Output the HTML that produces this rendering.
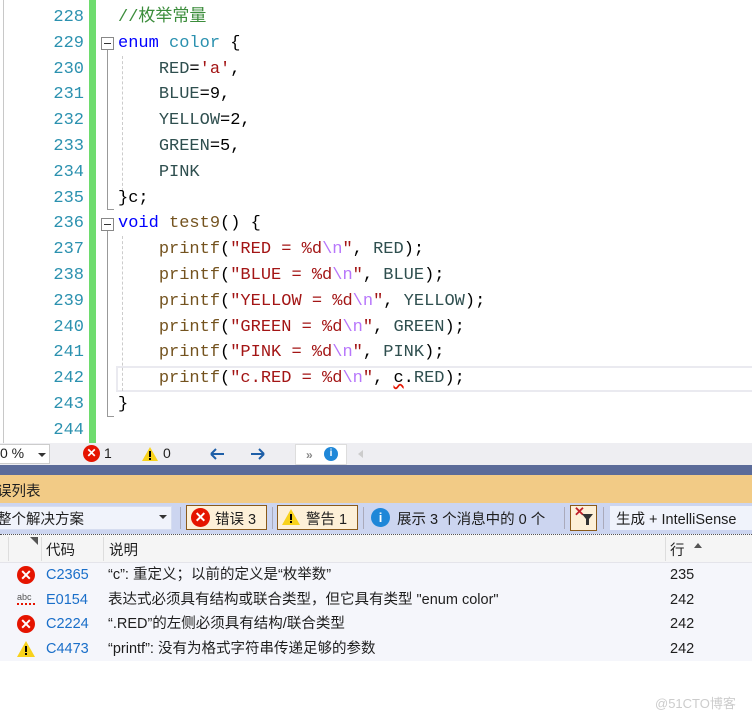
<!DOCTYPE html>
<html><head><meta charset="utf-8"><style>
*{margin:0;padding:0;box-sizing:border-box}
body{width:752px;height:721px;overflow:hidden;background:#fff;position:relative;font-family:"Liberation Sans","Noto Sans CJK SC",sans-serif}
.abs{position:absolute}
.ln{position:absolute;left:20px;width:64px;text-align:right;color:#2b91af;font-family:"Liberation Mono","Noto Sans CJK SC",monospace;font-size:17px;line-height:25.8px;height:25.8px}
.cl{position:absolute;left:118px;white-space:pre;font-family:"Liberation Mono","Noto Sans CJK SC",monospace;font-size:17px;line-height:25.8px;height:25.8px;color:#000}
.k{color:#0000ff}.t{color:#2b91af}.m{color:#2f4f4f}.s{color:#a31515}.e{color:#b776fb}.f{color:#74531f}.c{color:#3c8d3c}
.ui{font-size:14px;color:#1e1e1e;white-space:nowrap}
.row{position:absolute;left:0;width:752px;height:24.5px;font-size:14.5px;line-height:24.5px;color:#1e1e1e;white-space:nowrap}
.code{position:absolute;left:46px;color:#1a6fc9}
.desc{position:absolute;left:108px}
.lnum{position:absolute;left:670px}
.xic{position:absolute;width:18px;height:18px;border-radius:50%;background:#e51400;color:#fff;font-size:14px;font-weight:bold;line-height:18px;text-align:center}
</style></head><body>
<!-- editor gutter -->
<div class="abs" style="left:3px;top:0;width:1px;height:443px;background:#c8c8c8"></div>
<div class="abs" style="left:89px;top:0;width:7px;height:443px;background:#6edc6e"></div>
<!-- current line highlight -->
<div class="abs" style="left:116px;top:366px;width:640px;height:26px;border:2px solid #eaeaf0"></div>
<!-- fold markers -->
<div class="abs" style="left:101px;top:37px;width:13px;height:13px;border:1px solid #888;background:#fff"></div>
<div class="abs" style="left:104px;top:43px;width:7px;height:1px;background:#333"></div>
<div class="abs" style="left:107px;top:50px;width:1px;height:160px;background:#999"></div>
<div class="abs" style="left:107px;top:209px;width:7px;height:1px;background:#999"></div>
<div class="abs" style="left:101px;top:218px;width:13px;height:13px;border:1px solid #888;background:#fff"></div>
<div class="abs" style="left:104px;top:224px;width:7px;height:1px;background:#333"></div>
<div class="abs" style="left:107px;top:231px;width:1px;height:186px;background:#999"></div>
<div class="abs" style="left:107px;top:416px;width:7px;height:1px;background:#999"></div>
<div class="abs" style="left:122px;top:56px;width:0;height:140px;border-left:1px dashed #ccc"></div>
<div class="abs" style="left:122px;top:236px;width:0;height:155px;border-left:1px dashed #ccc"></div>

<div class="ln" style="top:-20.8px">227</div>
<div class="ln" style="top:5px">228</div><div class="cl" style="top:5px"><span class="c">//枚举常量</span></div>
<div class="ln" style="top:30.8px">229</div><div class="cl" style="top:30.8px"><span class="k">enum</span> <span class="t">color</span> {</div>
<div class="ln" style="top:56.6px">230</div><div class="cl" style="top:56.6px">    <span class="m">RED</span>=<span class="s">'a'</span>,</div>
<div class="ln" style="top:82.4px">231</div><div class="cl" style="top:82.4px">    <span class="m">BLUE</span>=9,</div>
<div class="ln" style="top:108.2px">232</div><div class="cl" style="top:108.2px">    <span class="m">YELLOW</span>=2,</div>
<div class="ln" style="top:134px">233</div><div class="cl" style="top:134px">    <span class="m">GREEN</span>=5,</div>
<div class="ln" style="top:159.8px">234</div><div class="cl" style="top:159.8px">    <span class="m">PINK</span></div>
<div class="ln" style="top:185.6px">235</div><div class="cl" style="top:185.6px">}c;</div>
<div class="ln" style="top:211.4px">236</div><div class="cl" style="top:211.4px"><span class="k">void</span> <span class="f">test9</span>() {</div>
<div class="ln" style="top:237.2px">237</div><div class="cl" style="top:237.2px">    <span class="f">printf</span>(<span class="s">"RED = %d</span><span class="e">\n</span><span class="s">"</span>, <span class="m">RED</span>);</div>
<div class="ln" style="top:263px">238</div><div class="cl" style="top:263px">    <span class="f">printf</span>(<span class="s">"BLUE = %d</span><span class="e">\n</span><span class="s">"</span>, <span class="m">BLUE</span>);</div>
<div class="ln" style="top:288.8px">239</div><div class="cl" style="top:288.8px">    <span class="f">printf</span>(<span class="s">"YELLOW = %d</span><span class="e">\n</span><span class="s">"</span>, <span class="m">YELLOW</span>);</div>
<div class="ln" style="top:314.6px">240</div><div class="cl" style="top:314.6px">    <span class="f">printf</span>(<span class="s">"GREEN = %d</span><span class="e">\n</span><span class="s">"</span>, <span class="m">GREEN</span>);</div>
<div class="ln" style="top:340.4px">241</div><div class="cl" style="top:340.4px">    <span class="f">printf</span>(<span class="s">"PINK = %d</span><span class="e">\n</span><span class="s">"</span>, <span class="m">PINK</span>);</div>
<div class="ln" style="top:366.2px">242</div><div class="cl" style="top:366.2px">    <span class="f">printf</span>(<span class="s">"c.RED = %d</span><span class="e">\n</span><span class="s">"</span>, <span style="text-decoration:underline wavy #e51400">c</span>.<span class="m">RED</span>);</div>
<div class="ln" style="top:392px">243</div><div class="cl" style="top:392px">}</div>
<div class="ln" style="top:417.8px">244</div>

<!-- status bar -->
<div class="abs" style="left:0;top:443px;width:752px;height:22px;background:#eeeef2"></div>
<div class="abs" style="left:-2px;top:444px;width:52px;height:20px;background:#fff;border:1px solid #ccc"></div>
<div class="abs ui" style="left:0;top:445px">0 %</div>
<div class="abs" style="left:38px;top:453px;border:4px solid transparent;border-top:4px solid #333"></div>
<div class="xic" style="left:83px;top:445px;width:17px;height:17px;font-size:12px;line-height:17px">✕</div>
<div class="abs ui" style="left:104px;top:445px">1</div>
<svg class="abs" style="left:141px;top:446px" width="18" height="16"><path d="M9 1L17 15H1Z" fill="#f8d21c"/><rect x="8" y="5" width="2" height="6" fill="#000"/><rect x="8" y="12" width="2" height="2" fill="#000"/></svg>
<div class="abs ui" style="left:163px;top:445px">0</div>
<svg class="abs" style="left:208px;top:446px" width="60" height="16"><path d="M3 8H16M3 8L8 3M3 8L8 13" stroke="#1e5fa8" stroke-width="2" fill="none"/><path d="M60 8" /><path d="M43 8H56M56 8L51 3M56 8L51 13" stroke="#1e5fa8" stroke-width="2" fill="none"/></svg>
<div class="abs" style="left:295px;top:444px;width:52px;height:21px;background:#fff;border:1px solid #ddd"></div>
<div class="abs" style="left:306px;top:448px;color:#888;font-size:12px;font-weight:bold">»</div>
<div class="abs" style="left:324px;top:447px;width:14px;height:14px;border-radius:50%;background:#1f87d8;color:#fff;font-size:10px;font-weight:bold;text-align:center;line-height:14px">i</div>
<div class="abs" style="left:354px;top:450px;border:4px solid transparent;border-right:5px solid #ccc"></div>
<div class="abs" style="left:0;top:465px;width:752px;height:10px;background:#5b6b99"></div>
<!-- orange header -->
<div class="abs" style="left:0;top:475px;width:752px;height:28px;background:#f2cb86"></div>
<div class="abs ui" style="left:-3px;top:480px;font-size:14.5px">误列表</div>
<!-- toolbar -->
<div class="abs" style="left:0;top:503px;width:752px;height:31px;background:#ccd5f0"></div>
<div class="abs" style="left:-2px;top:506px;width:174px;height:24px;background:#f0f3fb;border:1px solid #d6ddf0"></div>
<div class="abs ui" style="left:-3px;top:508px;font-size:14.5px">整个解决方案</div>
<div class="abs" style="left:159px;top:515px;border:4px solid transparent;border-top:4px solid #333"></div>
<div class="abs" style="left:180px;top:507px;width:1px;height:22px;background:#aab"></div>
<div class="abs" style="left:186px;top:505px;width:81px;height:25px;background:#fdf0d8;border:1px solid #8a5a1a"></div>
<div class="xic" style="left:191px;top:508px;width:19px;height:19px;line-height:19px">✕</div>
<div class="abs ui" style="left:215px;top:508px;font-size:14.5px">错误 3</div>
<div class="abs" style="left:272px;top:507px;width:1px;height:22px;background:#aab"></div>
<div class="abs" style="left:277px;top:505px;width:81px;height:25px;background:#fdf0d8;border:1px solid #8a5a1a"></div>
<svg class="abs" style="left:281px;top:508px" width="20" height="18"><path d="M10 1L19 17H1Z" fill="#f8d21c"/><rect x="9" y="6" width="2" height="6" fill="#000"/><rect x="9" y="13" width="2" height="2" fill="#000"/></svg>
<div class="abs ui" style="left:306px;top:508px;font-size:14.5px">警告 1</div>
<div class="abs" style="left:363px;top:507px;width:1px;height:22px;background:#aab"></div>
<div class="abs" style="left:371px;top:508px;width:19px;height:19px;border-radius:50%;background:#1f87d8;color:#fff;font-size:13px;font-weight:bold;text-align:center;line-height:19px">i</div>
<div class="abs ui" style="left:397px;top:508px;font-size:14.5px">展示 3 个消息中的 0 个</div>
<div class="abs" style="left:564px;top:507px;width:1px;height:22px;background:#aab"></div>
<div class="abs" style="left:570px;top:505px;width:27px;height:26px;background:#fdf0d8;border:1px solid #8a5a1a"></div>
<div class="abs" style="left:574px;top:504px;color:#c0202a;font-size:13px;font-weight:bold">✕</div>
<svg class="abs" style="left:582px;top:514px" width="12" height="12"><path d="M0 0H11L7 5V11H4V5Z" fill="#333"/></svg>
<div class="abs" style="left:603px;top:507px;width:1px;height:22px;background:#aab"></div>
<div class="abs" style="left:610px;top:506px;width:150px;height:24px;background:#f0f3fb"></div>
<div class="abs ui" style="left:616px;top:508px;font-size:14.5px">生成 + IntelliSense</div>
<!-- column header -->
<div class="abs" style="left:0;top:534px;width:752px;height:29px;background:#f5f5f5;border-top:1px dotted #555;border-bottom:1px solid #e4e4ea"></div>
<div class="abs" style="left:8px;top:537px;width:1px;height:24px;background:#ddd"></div>
<div class="abs" style="left:41px;top:537px;width:1px;height:24px;background:#ddd"></div>
<div class="abs" style="left:103px;top:537px;width:1px;height:24px;background:#ddd"></div>
<div class="abs" style="left:665px;top:537px;width:1px;height:24px;background:#ddd"></div>
<div class="abs" style="left:30px;top:536px;color:#555;font-size:8px">◥</div>
<div class="abs ui" style="left:46px;top:539px;font-size:14.5px">代码</div>
<div class="abs ui" style="left:109px;top:539px;font-size:14.5px">说明</div>
<div class="abs ui" style="left:670px;top:539px;font-size:14.5px">行</div>
<div class="abs" style="left:694px;top:543px;border:4px solid transparent;border-bottom:5px solid #555;border-top:0"></div>
<!-- rows -->
<div class="abs" style="left:0;top:563px;width:752px;height:98px;background:#f5f6fb"></div>
<div class="row" style="top:563px"><div class="xic" style="left:17px;top:3px">✕</div><span class="code">C2365</span><span class="desc">“c”: 重定义；以前的定义是“枚举数”</span><span class="lnum">235</span></div>
<div class="row" style="top:587.5px"><div class="abs" style="left:17px;top:-3px;font-size:9px;color:#555">abc</div><div class="abs" style="left:17px;top:14px;width:18px;height:3px;border-bottom:2px dotted #e51400"></div><span class="code">E0154</span><span class="desc">表达式必须具有结构或联合类型，但它具有类型 "enum color"</span><span class="lnum">242</span></div>
<div class="row" style="top:612px"><div class="xic" style="left:17px;top:3px">✕</div><span class="code">C2224</span><span class="desc">“.RED”的左侧必须具有结构/联合类型</span><span class="lnum">242</span></div>
<div class="row" style="top:636.5px"><svg class="abs" style="left:16px;top:3px" width="20" height="18"><path d="M10 1L19 17H1Z" fill="#f8d21c"/><rect x="9" y="6" width="2" height="6" fill="#000"/><rect x="9" y="13" width="2" height="2" fill="#000"/></svg><span class="code">C4473</span><span class="desc">“printf”: 没有为格式字符串传递足够的参数</span><span class="lnum">242</span></div>
<div class="abs" style="left:655px;top:693px;color:#ccc;font-size:13px">@51CTO博客</div>
</body></html>
